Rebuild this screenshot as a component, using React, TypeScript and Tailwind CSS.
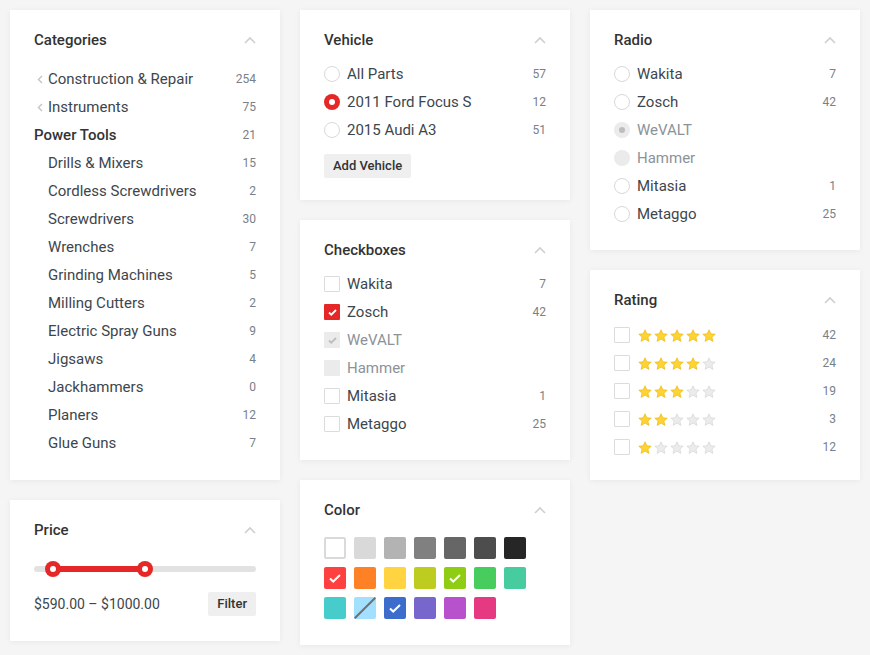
import React from 'react';

const Chevron = () => (
  <svg width="12" height="8" viewBox="0 0 12 8" className="shrink-0">
    <path d="M1 7L6 2l5 5" fill="none" stroke="#cfcfcf" strokeWidth="1.6" />
  </svg>
);

const Card: React.FC<{ title: string; className?: string; children: React.ReactNode }> = ({ title, className = '', children }) => (
  <div className={`bg-white shadow-[0_1px_6px_rgba(0,0,0,0.06)] px-6 pt-5 ${className}`}>
    <div className="flex items-center justify-between h-5">
      <h3 className="text-[15px] font-medium text-[#333]">{title}</h3>
      <Chevron />
    </div>
    {children}
  </div>
);

const Count: React.FC<{ n?: number }> = ({ n }) => (
  <span className="text-[12px] text-[#7a8087]">{n}</span>
);

const CheckMark = ({ color = '#fff' }: { color?: string }) => (
  <svg width="9" height="7" viewBox="0 0 9 7">
    <path d="M1 3.5l2.3 2.2L8 1" fill="none" stroke={color} strokeWidth="1.8" />
  </svg>
);

const BigCheck = () => (
  <svg width="12" height="9" viewBox="0 0 12 9">
    <path d="M1 4.5l3.2 3L11 1" fill="none" stroke="#fff" strokeWidth="2" />
  </svg>
);

type State = 'off' | 'on' | 'disabled-on' | 'disabled';

const Radio: React.FC<{ state: State }> = ({ state }) => {
  if (state === 'on')
    return (
      <span className="w-4 h-4 rounded-full bg-[#e52727] flex items-center justify-center shrink-0">
        <span className="w-[6px] h-[6px] rounded-full bg-white" />
      </span>
    );
  if (state === 'disabled-on')
    return (
      <span className="w-4 h-4 rounded-full bg-[#ebebeb] flex items-center justify-center shrink-0">
        <span className="w-[6px] h-[6px] rounded-full bg-[#bdbdbd]" />
      </span>
    );
  if (state === 'disabled') return <span className="w-4 h-4 rounded-full bg-[#ebebeb] shrink-0" />;
  return <span className="w-4 h-4 rounded-full border border-[#d9d9d9] shrink-0" />;
};

const Checkbox: React.FC<{ state: State }> = ({ state }) => {
  if (state === 'on')
    return (
      <span className="w-4 h-4 rounded-[1px] bg-[#e52727] flex items-center justify-center shrink-0">
        <CheckMark />
      </span>
    );
  if (state === 'disabled-on')
    return (
      <span className="w-4 h-4 rounded-[1px] bg-[#ebebeb] flex items-center justify-center shrink-0">
        <CheckMark color="#bdbdbd" />
      </span>
    );
  if (state === 'disabled') return <span className="w-4 h-4 rounded-[1px] bg-[#ebebeb] shrink-0" />;
  return <span className="w-4 h-4 rounded-[1px] border border-[#dcdcdc] shrink-0" />;
};

const Star = ({ filled }: { filled: boolean }) => (
  <svg width="14" height="13" viewBox="0 0 14 13">
    <path
      d="M7 0.8l1.8 4 4.4.4-3.3 2.9 1 4.3L7 10.1 3.1 12.4l1-4.3L.8 5.2l4.4-.4z"
      fill={filled ? '#ffd333' : '#ececec'}
      stroke={filled ? '#e9b714' : '#d5d5d5'}
      strokeWidth="0.7"
    />
  </svg>
);

const categories: { label: string; count: number; kind: 'parent' | 'current' | 'child' }[] = [
  { label: 'Construction & Repair', count: 254, kind: 'parent' },
  { label: 'Instruments', count: 75, kind: 'parent' },
  { label: 'Power Tools', count: 21, kind: 'current' },
  { label: 'Drills & Mixers', count: 15, kind: 'child' },
  { label: 'Cordless Screwdrivers', count: 2, kind: 'child' },
  { label: 'Screwdrivers', count: 30, kind: 'child' },
  { label: 'Wrenches', count: 7, kind: 'child' },
  { label: 'Grinding Machines', count: 5, kind: 'child' },
  { label: 'Milling Cutters', count: 2, kind: 'child' },
  { label: 'Electric Spray Guns', count: 9, kind: 'child' },
  { label: 'Jigsaws', count: 4, kind: 'child' },
  { label: 'Jackhammers', count: 0, kind: 'child' },
  { label: 'Planers', count: 12, kind: 'child' },
  { label: 'Glue Guns', count: 7, kind: 'child' },
];

const brands: { label: string; count?: number }[] = [
  { label: 'Wakita', count: 7 },
  { label: 'Zosch', count: 42 },
  { label: 'WeVALT' },
  { label: 'Hammer' },
  { label: 'Mitasia', count: 1 },
  { label: 'Metaggo', count: 25 },
];

const radioStates: State[] = ['off', 'off', 'disabled-on', 'disabled', 'off', 'off'];
const checkStates: State[] = ['off', 'on', 'disabled-on', 'disabled', 'off', 'off'];

const vehicles = [
  { label: 'All Parts', count: 57, state: 'off' as State },
  { label: '2011 Ford Focus S', count: 12, state: 'on' as State },
  { label: '2015 Audi A3', count: 51, state: 'off' as State },
];

const ratings = [
  { stars: 5, count: 42 },
  { stars: 4, count: 24 },
  { stars: 3, count: 19 },
  { stars: 2, count: 3 },
  { stars: 1, count: 12 },
];

const colors: { bg: string; check?: boolean; white?: boolean; cross?: boolean }[][] = [
  [
    { bg: '#ffffff', white: true },
    { bg: '#d9d9d9' },
    { bg: '#b3b3b3' },
    { bg: '#808080' },
    { bg: '#666666' },
    { bg: '#4d4d4d' },
    { bg: '#262626' },
  ],
  [
    { bg: '#ff4040', check: true },
    { bg: '#ff8126' },
    { bg: '#ffd440' },
    { bg: '#becc1f' },
    { bg: '#8fcc14', check: true },
    { bg: '#47cc5e' },
    { bg: '#47cca0' },
  ],
  [
    { bg: '#47cccc' },
    { bg: '#a3e0ff', cross: true },
    { bg: '#3d6dcc', check: true },
    { bg: '#7766cc' },
    { bg: '#b852cc' },
    { bg: '#e53981' },
  ],
];

const App: React.FC = () => {
  return (
    <div className="min-h-screen bg-[#f5f5f5] p-[10px] font-['Roboto',sans-serif] text-[#3d464d]">
      <div className="grid grid-cols-[270px_270px_270px] gap-5 items-start">
        {/* Column 1 */}
        <div className="flex flex-col gap-5">
          <Card title="Categories" className="pb-[23px]">
            <ul className="mt-[15px]">
              {categories.map((c) => (
                <li key={c.label} className="h-7 flex items-center justify-between text-[15px]">
                  {c.kind === 'parent' && (
                    <span className="flex items-center">
                      <span className="w-[14px] flex items-center">
                        <svg width="6" height="9" viewBox="0 0 6 9" className="ml-[3px]">
                          <path d="M5 1L1.5 4.5 5 8" fill="none" stroke="#c4c4c4" strokeWidth="1.4" />
                        </svg>
                      </span>
                      {c.label}
                    </span>
                  )}
                  {c.kind === 'current' && <span className="font-medium text-[#333]">{c.label}</span>}
                  {c.kind === 'child' && <span className="pl-[14px]">{c.label}</span>}
                  <Count n={c.count} />
                </li>
              ))}
            </ul>
          </Card>

          <Card title="Price" className="pb-[25px]">
            <div className="relative h-4 mt-[21px]">
              <div className="absolute left-0 right-0 top-[5px] h-[6px] rounded-full bg-[#e2e2e2]" />
              <div className="absolute left-[19px] w-[92px] top-[5px] h-[6px] bg-[#e52727]" />
              <span className="absolute left-[11px] top-0 w-4 h-4 rounded-full bg-[#e52727] flex items-center justify-center">
                <span className="w-[6px] h-[6px] rounded-full bg-white" />
              </span>
              <span className="absolute left-[103px] top-0 w-4 h-4 rounded-full bg-[#e52727] flex items-center justify-center">
                <span className="w-[6px] h-[6px] rounded-full bg-white" />
              </span>
            </div>
            <div className="mt-[15px] flex items-center justify-between h-6">
              <span className="text-[14px]">$590.00 – $1000.00</span>
              <button className="h-6 px-[9px] rounded-[2px] bg-[#efefef] text-[13px] font-medium text-[#333]">Filter</button>
            </div>
          </Card>
        </div>

        {/* Column 2 */}
        <div className="flex flex-col gap-5">
          <Card title="Vehicle" className="pb-[22px]">
            <ul className="mt-[10px]">
              {vehicles.map((v) => (
                <li key={v.label} className="h-7 flex items-center justify-between text-[15px]">
                  <span className="flex items-center gap-[7px]">
                    <Radio state={v.state} />
                    {v.label}
                  </span>
                  <Count n={v.count} />
                </li>
              ))}
            </ul>
            <button className="mt-[10px] h-6 px-[9px] rounded-[2px] bg-[#efefef] text-[13px] font-medium text-[#333]">
              Add Vehicle
            </button>
          </Card>

          <Card title="Checkboxes" className="pb-[22px]">
            <ul className="mt-[10px]">
              {brands.map((b, i) => {
                const disabled = checkStates[i].startsWith('disabled');
                return (
                  <li key={b.label} className="h-7 flex items-center justify-between text-[15px]">
                    <span className={`flex items-center gap-[7px] ${disabled ? 'text-[#8c9298]' : ''}`}>
                      <Checkbox state={checkStates[i]} />
                      {b.label}
                    </span>
                    <Count n={b.count} />
                  </li>
                );
              })}
            </ul>
          </Card>

          <Card title="Color" className="pb-[26px]">
            <div className="mt-[17px] flex flex-col gap-2">
              {colors.map((row, ri) => (
                <div key={ri} className="flex gap-2">
                  {row.map((c, ci) => (
                    <span
                      key={ci}
                      className={`relative w-[22px] h-[22px] rounded-[2px] flex items-center justify-center overflow-hidden ${
                        c.white ? 'border-2 border-[#dadada]' : ''
                      }`}
                      style={{ backgroundColor: c.bg }}
                    >
                      {c.check && <BigCheck />}
                      {c.cross && (
                        <svg width="22" height="22" viewBox="0 0 22 22" className="absolute inset-0">
                          <path d="M0 22L22 0" stroke="#707070" strokeWidth="2" />
                        </svg>
                      )}
                    </span>
                  ))}
                </div>
              ))}
            </div>
          </Card>
        </div>

        {/* Column 3 */}
        <div className="flex flex-col gap-5">
          <Card title="Radio" className="pb-[22px]">
            <ul className="mt-[10px]">
              {brands.map((b, i) => {
                const disabled = radioStates[i].startsWith('disabled');
                return (
                  <li key={b.label} className="h-7 flex items-center justify-between text-[15px]">
                    <span className={`flex items-center gap-[7px] ${disabled ? 'text-[#8c9298]' : ''}`}>
                      <Radio state={radioStates[i]} />
                      {b.label}
                    </span>
                    <Count n={b.count} />
                  </li>
                );
              })}
            </ul>
          </Card>

          <Card title="Rating" className="pb-[19px]">
            <ul className="mt-[11px]">
              {ratings.map((r) => (
                <li key={r.stars} className="h-7 flex items-center justify-between">
                  <span className="flex items-center gap-2">
                    <Checkbox state="off" />
                    <span className="flex gap-[2px]">
                      {[1, 2, 3, 4, 5].map((s) => (
                        <Star key={s} filled={s <= r.stars} />
                      ))}
                    </span>
                  </span>
                  <Count n={r.count} />
                </li>
              ))}
            </ul>
          </Card>
        </div>
      </div>
    </div>
  );
};

export default App;
